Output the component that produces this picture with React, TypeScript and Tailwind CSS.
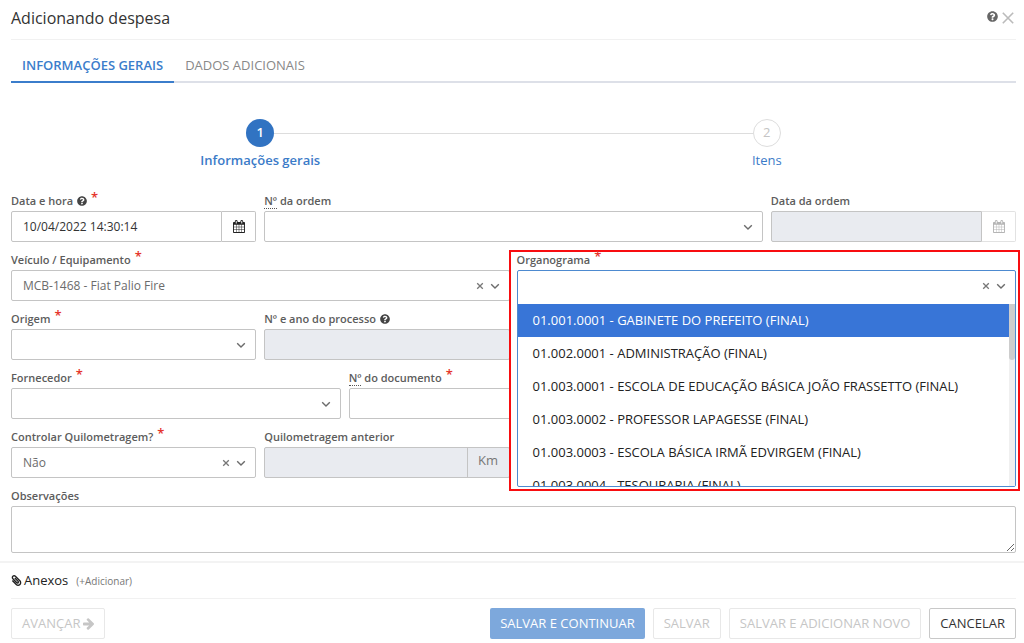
import type { ReactNode } from 'react';
import { FaPaperclip, FaQuestionCircle } from 'react-icons/fa';

const box = 'h-[31px] w-full rounded-xs border border-[#c4c4c4] bg-white text-[12px] outline-none';

const organograms = [
  '01.001.0001 - GABINETE DO PREFEITO (FINAL)',
  '01.002.0001 - ADMINISTRAÇÃO (FINAL)',
  '01.003.0001 - ESCOLA DE EDUCAÇÃO BÁSICA JOÃO FRASSETTO (FINAL)',
  '01.003.0002 - PROFESSOR LAPAGESSE (FINAL)',
  '01.003.0003 - ESCOLA BÁSICA IRMÃ EDVIRGEM (FINAL)',
  '01.003.0004 - TESOURARIA (FINAL)',
];

function Chevron() {
  return (
    <svg viewBox="0 0 10 10" className="pointer-events-none size-[10px] text-[#6b6b6b]" fill="none" stroke="currentColor" strokeWidth="1.4" aria-hidden="true">
      <path d="M1.2 3.2 5 6.9 8.8 3.2" />
    </svg>
  );
}

function ClearIcon() {
  return (
    <svg viewBox="0 0 8 8" className="size-2 text-[#777]" fill="none" stroke="currentColor" strokeWidth="1.3" aria-hidden="true">
      <path d="M1.2 1.2 6.8 6.8M6.8 1.2 1.2 6.8" />
    </svg>
  );
}

function CalendarIcon() {
  return (
    <svg viewBox="0 0 1664 1792" className="h-[13px] w-3" fill="currentColor" aria-hidden="true">
      <path d="M128 1664h288v-288H128v288zm352 0h320v-288H480v288zM128 1312h288V992H128v320zm352 0h320V992H480v320zM128 928h288V640H128v288zm736 736h320v-288H864v288zM480 928h320V640H480v288zm768 736h288v-288h-288v288zm-384-352h320V992H864v320zM512 448V160q0-13-9.5-22.5T480 128h-64q-13 0-22.5 9.5T384 160v288q0 13 9.5 22.5T416 480h64q13 0 22.5-9.5T512 448zm736 864h288V992h-288v320zM864 928h320V640H864v288zm384 0h288V640h-288v288zm32-480V160q0-13-9.5-22.5T1248 128h-64q-13 0-22.5 9.5T1152 160v288q0 13 9.5 22.5t22.5 9.5h64q13 0 22.5-9.5T1280 448zm384-64v1280q0 52-38 90t-90 38H128q-52 0-90-38t-38-90V384q0-52 38-90t90-38h128v-96q0-66 47-113T416 0h64q66 0 113 47t47 113v96h384v-96q0-66 47-113t113-47h64q66 0 113 47t47 113v96h128q52 0 90 38t38 90z" />
    </svg>
  );
}

function ArrowIcon() {
  return (
    <svg viewBox="0 180 1472 1560" className="ml-[3px] h-3 w-[11px]" fill="currentColor" aria-hidden="true">
      <path d="M1472 960q0 54-37 91l-651 651q-39 37-91 37-51 0-90-37l-75-75q-38-38-38-91t38-91l293-293H117q-52 0-84.5-37.5T0 1024V896q0-53 32.5-90.5T117 768h704L528 474q-38-36-38-90t38-90l75-75q38-38 90-38 53 0 91 38l651 651q37 35 37 90z" />
    </svg>
  );
}

function FieldLabel({ id, children, required, help }: { id: string; children: ReactNode; required?: boolean; help?: boolean }) {
  return (
    <label htmlFor={id} className="flex h-[18px] items-center pb-[2px] text-[11px] leading-[16px] font-semibold whitespace-nowrap text-[#5c5c5c]">
      <span>{children}</span>
      {help && <FaQuestionCircle className="ml-1 size-[10px] text-[#444]" />}
      {required && <span className="mb-2 ml-1 text-[13px] leading-none text-[#e5342b]">*</span>}
    </label>
  );
}

function Number() {
  return <abbr className="border-b border-dotted border-[#555] no-underline">Nº</abbr>;
}

function SelectBox({ id, value, clearable }: { id: string; value?: string; clearable?: boolean }) {
  return (
    <div className="relative">
      <select id={id} className={`${box} appearance-none pr-10 pl-[11px] text-[#6b6b6b]`} defaultValue={value ?? ''}>
        <option>{value ?? ''}</option>
      </select>
      <div className="pointer-events-none absolute inset-y-0 right-[10px] flex items-center gap-[6px]">
        {clearable && (
          <button type="button" aria-label="Limpar" className="pointer-events-auto">
            <ClearIcon />
          </button>
        )}
        <Chevron />
      </div>
    </div>
  );
}

function DateBox({ id, value, disabled }: { id: string; value?: string; disabled?: boolean }) {
  return (
    <div className="flex">
      <input
        id={id}
        type="text"
        defaultValue={value}
        disabled={disabled}
        className="h-[31px] min-w-0 flex-1 rounded-l-xs border border-[#c4c4c4] bg-white px-[11px] text-[12px] text-[#333] outline-none disabled:bg-[#e9ebf0]"
      />
      <button
        type="button"
        aria-label="Abrir calendário"
        disabled={disabled}
        className="flex h-[31px] w-[34px] items-center justify-center rounded-r-xs border border-l-0 border-[#c4c4c4] text-[#222] disabled:border-[#e2e2e2] disabled:text-[#b5b5b5]"
      >
        <CalendarIcon />
      </button>
    </div>
  );
}

function OrganogramPicker() {
  return (
    <div className="absolute -top-[2px] -right-1 -left-[9px] z-10 border-2 border-[#f80d10] bg-white pr-[2px] pb-[2px] pl-[6px]">
      <FieldLabel id="organograma" required>Organograma</FieldLabel>
      <div className="rounded-xs border border-[#4d8ad0]">
        <div className="relative">
          <input id="organograma" type="text" role="combobox" aria-expanded="true" aria-controls="organogramas" className="block h-[33px] w-full px-[11px] text-[12px] outline-none" />
          <div className="absolute top-0 right-[9px] flex h-[30px] items-center gap-[6px]">
            <button type="button" aria-label="Limpar">
              <ClearIcon />
            </button>
            <Chevron />
          </div>
        </div>
        <div className="relative h-[182px] overflow-hidden">
          <ul id="organogramas" role="listbox" aria-label="Organograma" className="mr-[6px]">
            {organograms.map((name, i) => (
              <li
                key={name}
                role="option"
                aria-selected={i === 0}
                className="flex h-[33px] items-center px-[15px] text-[13px] whitespace-nowrap text-[#222] aria-selected:bg-[#3875d7] aria-selected:text-white"
              >
                {name}
              </li>
            ))}
          </ul>
          <div className="absolute inset-y-0 right-0 w-[6px] bg-[#f0f0f0]">
            <div className="h-14 rounded-b-sm bg-[#cdcdcd]" />
          </div>
        </div>
      </div>
    </div>
  );
}

function Step({ number, title, active }: { number: number; title: string; active?: boolean }) {
  return (
    <li className="flex flex-1 flex-col items-center">
      <span
        className={
          active
            ? 'relative flex size-7 items-center justify-center rounded-full bg-[#3173c2] text-[13px] font-semibold text-white'
            : 'relative flex size-7 items-center justify-center rounded-full border border-[#ddd] bg-white text-[13px] text-[#c4c4c4]'
        }
      >
        {number}
      </span>
      <span className={active ? 'mt-1 text-[13px] leading-[18px] font-semibold text-[#3b7bc8]' : 'mt-1 text-[13px] leading-[18px] text-[#3b7bc8]'}>{title}</span>
    </li>
  );
}

const plainButton = 'flex h-[31px] items-center rounded-xs border border-[#c8c8c8] bg-white px-[10px] text-[13px] whitespace-nowrap text-[#333] disabled:border-[#e8e8e8] disabled:text-[#c6c6c6]';

export default function App() {
  return (
    <main className="bg-white font-['Open_Sans','Noto_Sans',sans-serif] text-[#333]">
      <div className="pr-2 pl-[11px]">
        <header className="flex h-10 items-center justify-between border-b border-[#f1f1f1] pb-1">
          <h1 className="text-[16px]">Adicionando despesa</h1>
          <div className="flex items-center gap-1 pr-[2px]">
            <button type="button" aria-label="Ajuda" className="mb-[2px] text-[#666]">
              <FaQuestionCircle className="size-[11px]" />
            </button>
            <button type="button" aria-label="Fechar" className="text-[#bbb]">
              <svg viewBox="0 0 12 12" className="size-3" fill="none" stroke="currentColor" strokeWidth="1.6" aria-hidden="true">
                <path d="M.8.8 11.2 11.2M11.2.8.8 11.2" />
              </svg>
            </button>
          </div>
        </header>

        <nav className="flex h-[43px] border-b-2 border-[#dde0e8] text-[13px]">
          <a href="#gerais" className="-mb-[2px] flex items-center border-b-2 border-[#3b7dcb] px-[11px] pt-[10px] font-semibold text-[#3b7dcb]">
            INFORMAÇÕES GERAIS
          </a>
          <a href="#adicionais" className="-mb-[2px] flex items-center border-b-2 border-transparent px-[11px] pt-[10px] text-[#888]">
            DADOS ADICIONAIS
          </a>
        </nav>

        <ol className="relative -mx-1 mt-9 flex">
          <li role="presentation" className="absolute top-[14px] right-1/4 left-1/4 h-px bg-[#ddd]" />
          <Step number={1} title="Informações gerais" active />
          <Step number={2} title="Itens" />
        </ol>

        <form id="despesa" className="mt-6 grid grid-cols-12 gap-x-2 gap-y-[10px]">
          <div className="col-span-3">
            <FieldLabel id="data" required help>Data e hora</FieldLabel>
            <DateBox id="data" value="10/04/2022 14:30:14" />
          </div>
          <div className="col-span-6">
            <FieldLabel id="ordem"><Number /> da ordem</FieldLabel>
            <SelectBox id="ordem" />
          </div>
          <div className="col-span-3">
            <FieldLabel id="data-ordem">Data da ordem</FieldLabel>
            <DateBox id="data-ordem" disabled />
          </div>

          <div className="col-span-6">
            <FieldLabel id="veiculo" required>Veículo / Equipamento</FieldLabel>
            <SelectBox id="veiculo" value="MCB-1468 - Fiat Palio Fire" clearable />
          </div>
          <div className="relative col-span-6">
            <OrganogramPicker />
          </div>

          <div className="col-span-3">
            <FieldLabel id="origem" required>Origem</FieldLabel>
            <SelectBox id="origem" />
          </div>
          <div className="col-span-3">
            <FieldLabel id="processo" help>Nº e ano do processo</FieldLabel>
            <input id="processo" type="text" disabled className="block h-[31px] w-full rounded-xs border border-[#c4c4c4] bg-[#e9ebf0]" />
          </div>

          <div className="col-span-4 col-start-1">
            <FieldLabel id="fornecedor" required>Fornecedor</FieldLabel>
            <SelectBox id="fornecedor" />
          </div>
          <div className="col-span-4">
            <FieldLabel id="documento" required><Number /> do documento</FieldLabel>
            <input id="documento" type="text" className={`${box} block px-[11px] text-[#333]`} />
          </div>

          <div className="col-span-3 col-start-1">
            <FieldLabel id="controlar" required>Controlar Quilometragem?</FieldLabel>
            <SelectBox id="controlar" value="Não" clearable />
          </div>
          <div className="col-span-3">
            <FieldLabel id="km">Quilometragem anterior</FieldLabel>
            <div className="flex h-[31px] overflow-hidden rounded-xs border border-[#c4c4c4] bg-[#e9ebf0]">
              <input id="km" type="text" disabled className="min-w-0 flex-1" />
              <span className="flex w-[42px] items-center justify-center border-l border-[#c4c4c4] pb-1 text-[13px] text-[#777]">Km</span>
            </div>
          </div>

          <div className="col-span-12">
            <FieldLabel id="observacoes">Observações</FieldLabel>
            <textarea id="observacoes" className="block h-[47px] w-full resize-y rounded-xs border border-[#c4c4c4] px-[11px] text-[12px] outline-none" />
          </div>
        </form>
      </div>

      <section className="mt-2 border-t-2 border-[#f3f3f3] pr-2 pl-[11px]">
        <div className="flex h-9 items-center border-b border-[#f1f1f1]">
          <FaPaperclip className="size-[11px] -scale-x-100 text-[#222]" />
          <h2 className="ml-[2px] text-[13px] text-[#222]">Anexos</h2>
          <button type="button" className="ml-2 pt-[2px] text-[10px] text-[#777]">(+Adicionar)</button>
        </div>
        <footer className="flex items-center gap-2 py-[9px]">
          <button type="button" disabled className={`${plainButton} mr-auto`}>
            AVANÇAR
            <ArrowIcon />
          </button>
          <button type="submit" form="despesa" disabled className="flex h-[31px] items-center rounded-xs bg-[#7da8dc] px-[10px] text-[13px] whitespace-nowrap text-white">
            SALVAR E CONTINUAR
          </button>
          <button type="button" disabled className={plainButton}>SALVAR</button>
          <button type="button" disabled className={plainButton}>SALVAR E ADICIONAR NOVO</button>
          <button type="button" className={plainButton}>CANCELAR</button>
        </footer>
      </section>
    </main>
  );
}
